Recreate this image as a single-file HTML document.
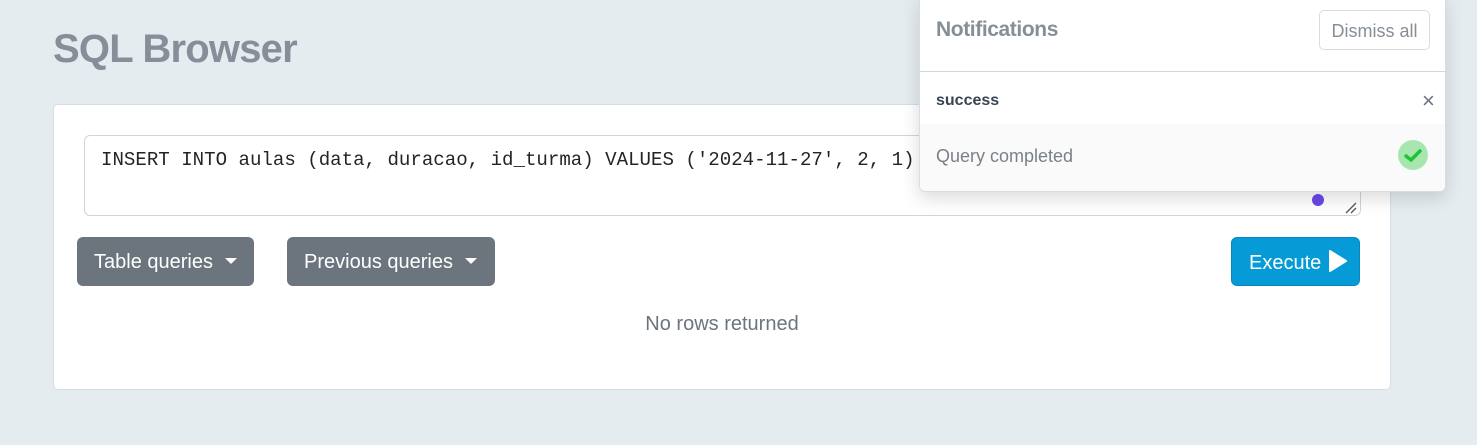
<!DOCTYPE html>
<html><head><style>
*{box-sizing:border-box;margin:0;padding:0}
body{width:1477px;height:445px;background:#e5ecf0;font-family:"Liberation Sans",sans-serif;position:relative;overflow:hidden}
.abs{position:absolute}
h1{position:absolute;left:53px;top:27px;font-size:40px;font-weight:bold;color:#878e99;letter-spacing:-0.8px}
.card{left:53px;top:104px;width:1338px;height:286px;background:#fff;border:1px solid #d5dde5;border-radius:5px}
.ta{left:84px;top:135px;width:1277px;height:81px;border:1px solid #ced4da;border-radius:6px;background:#fff}
.code{left:101px;top:149px;font-family:"Liberation Mono",monospace;font-size:19.1px;color:#212529;white-space:pre}
.btn{top:237px;height:49px;border-radius:6px;background:#6c757d;color:#fff;font-size:20px;line-height:51px;padding-left:17px}
.caret{display:inline-block;width:0;height:0;border-left:6px solid transparent;border-right:6px solid transparent;border-top:6px solid #fff;vertical-align:4px;margin-left:12px}
.exec{left:1231px;top:237px;width:129px;height:49px;border-radius:6px;background:#069bd6;border:1px solid #0589c0;color:#fff;font-size:20px;line-height:49px;padding-left:17px}
.nr{left:0;width:1444px;top:313px;text-align:center;font-size:20px;color:#6c757d}
.panel{left:919px;top:-5px;width:527px;height:197px;background:#fff;border:1px solid #d5dde5;border-radius:6px;box-shadow:0 6px 18px rgba(0,0,0,.15);overflow:hidden}
</style></head><body>
<h1>SQL Browser</h1>
<div class="abs card"></div>
<div class="abs ta"></div>
<div class="abs code">INSERT INTO aulas (data, duracao, id_turma) VALUES ('2024-11-27', 2, 1)</div>
<div class="abs" style="left:1312px;top:194px;width:12px;height:12px;border-radius:50%;background:#6a48ec"></div>
<svg class="abs" style="left:1344px;top:202px" width="14" height="12"><path d="M2 11L12 1M7 11L12 6" stroke="#555" stroke-width="1.3"/></svg>
<div class="abs btn" style="left:77px;width:177px">Table queries<span class="caret"></span></div>
<div class="abs btn" style="left:287px;width:208px">Previous queries<span class="caret"></span></div>
<div class="abs exec" style="line-height:51px">Execute <svg width="20" height="22" style="vertical-align:-3px"><path d="M3 1L19 11L3 21Z" fill="#fff" stroke="#fff" stroke-width="2" stroke-linejoin="round"/></svg></div>
<div class="abs nr">No rows returned</div>
<div class="abs panel">
  <div class="abs" style="left:16px;top:22px;font-size:21px;color:#868e96;font-weight:bold;letter-spacing:-0.4px">Notifications</div>
  <div class="abs" style="left:399px;top:14px;width:111px;height:40px;border:1px solid #d5dde5;border-radius:5px;font-size:18px;color:#868e96;line-height:40px;text-align:center">Dismiss all</div>
  <div class="abs" style="left:0;top:75px;width:100%;height:1px;background:#cfd8e3"></div>
  <div class="abs" style="left:16px;top:96px;font-size:16px;font-weight:bold;color:#3a4552">success</div>
  <div class="abs" style="left:502px;top:92px;font-size:22px;color:#6c757d">×</div>
  <div class="abs" style="left:0;top:128px;width:100%;height:70px;background:#fafafa"></div>
  <div class="abs" style="left:16px;top:150px;font-size:18px;color:#7a8087">Query completed</div>
  <div class="abs" style="left:478px;top:144px;width:30px;height:30px;border-radius:50%;background:#a8e6b0"></div>
  <svg class="abs" style="left:484px;top:152px" width="18" height="15"><path d="M2 8L7 12L16 3" stroke="#1ec434" stroke-width="3.5" fill="none" stroke-linecap="round" stroke-linejoin="round"/></svg>
</div>
</body></html>
